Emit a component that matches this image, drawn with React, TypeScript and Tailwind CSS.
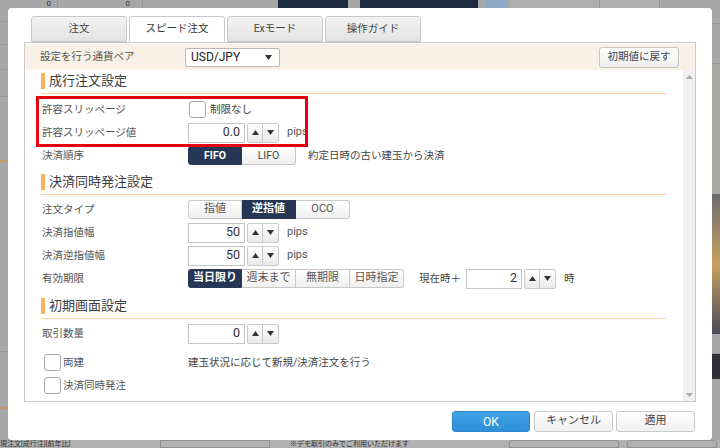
import React from "react";

const FONT = "font-[family-name:Roboto,'Noto_Sans_CJK_JP',sans-serif]";

const Up = () => (
  <svg width="7" height="5" viewBox="0 0 7 5"><path d="M3.5 0L7 5H0z" fill="#333" /></svg>
);
const Down = () => (
  <svg width="7" height="5" viewBox="0 0 7 5"><path d="M0 0H7L3.5 5z" fill="#333" /></svg>
);

const Spin = () => (
  <div className="ml-[2px] flex h-[20px] rounded-[2px] border border-[#c9c9c9] bg-gradient-to-b from-white to-[#eaeaea]">
    <div className="flex w-[15px] items-center justify-center border-r border-[#c9c9c9]"><Up /></div>
    <div className="flex w-[15px] items-center justify-center"><Down /></div>
  </div>
);

const NumInput = ({ value, w = 57 }: { value: string; w?: number }) => (
  <div
    className="flex h-[20px] items-center justify-end border border-[#c4c4c4] bg-white pr-[4px] text-[12.5px] text-[#333]"
    style={{ width: w }}
  >
    {value}
  </div>
);

const Seg = ({ items, active }: { items: string[]; active: number }) => (
  <div className="flex h-[19px]">
    {items.map((t, i) => (
      <div
        key={t}
        className={
          "flex w-[54px] items-center justify-center border text-[11px] " +
          (i > 0 ? "border-l-0 " : "rounded-l-[3px] ") +
          (i === items.length - 1 ? "rounded-r-[3px] " : "") +
          (i === active
            ? "border-[#253755] bg-[#253755] font-bold text-white"
            : "border-[#c8c8c8] bg-gradient-to-b from-white to-[#efefef] text-[#555]")
        }
      >
        {t}
      </div>
    ))}
  </div>
);

const Row = ({ label, children, className = "" }: { label?: string; children?: React.ReactNode; className?: string }) => (
  <div className={"flex h-[23px] items-center " + className}>
    <div className="w-[147px] pl-[1px] text-[10.5px] text-[#555]">{label}</div>
    {children}
  </div>
);

const Heading = ({ title, className = "" }: { title: string; className?: string }) => (
  <div className={"flex items-center border-b border-[#fbd29c] pb-[4px] pt-[2px] " + className}>
    <div className="h-[16px] w-[4px] bg-[#f8b257]" />
    <span className="ml-[4px] text-[13px] leading-[16px] text-[#3d3d3d]">{title}</span>
  </div>
);

const Check = ({ className = "" }: { className?: string }) => (
  <div className={"h-[17px] w-[17px] rounded-[3px] border border-[#a9a9a9] bg-white " + className} />
);

const Pips = () => <span className="ml-[8px] text-[11px] text-[#555]">pips</span>;

const Tab = ({ label, active }: { label: string; active?: boolean }) => (
  <div
    className={
      "flex h-[26px] w-[96px] items-center justify-center rounded-t-[3px] border text-[10.5px] " +
      (active
        ? "relative z-10 -mb-px border-[#c8c8c8] border-b-white bg-white text-[#333]"
        : "border-[#c8c8c8] bg-gradient-to-b from-[#f3f3f3] to-[#e3e3e3] text-[#444]")
    }
  >
    {label}
  </div>
);

const Btn = ({ label, className = "" }: { label: string; className?: string }) => (
  <div
    className={
      "flex h-[21px] items-center justify-center rounded-[3px] border " + className
    }
  >
    {label}
  </div>
);

export default function App() {
  return (
    <div className={"relative h-[448px] w-[720px] overflow-hidden bg-[#a7a7a7] " + FONT}>
      {/* dimmed background page */}
      <div className="absolute left-0 top-0 flex h-[8px] w-[720px] text-[8px] leading-[8px] text-[#333]">
        <div className="flex w-[58px] justify-end border-r border-[#969696] pr-[6px]">0</div>
        <div className="flex w-[85px] justify-end border-r border-[#969696] pr-[12px]">0</div>
        <div className="w-[135px]" />
        <div className="w-[70px] bg-[#1d2a3f]" />
        <div className="w-[12px]" />
        <div className="w-[118px] bg-[#1d2a3f]" />
        <div className="ml-[8px] w-[22px] bg-[#8ea9c6]" />
        <div className="ml-[2px] w-[90px] border-r border-[#969696] bg-[#aeaeae]" />
        <div className="w-[60px] border-r border-[#969696] bg-[#aeaeae]" />
      </div>
      <div className="absolute left-0 top-[8px] flex h-[432px] w-[8px] flex-col">
        <div className="h-[14px] border-b border-[#979797]" />
        <div className="h-[23px] border-b border-[#979797]" />
        <div className="h-[25px] border-b border-[#979797]" />
        <div className="h-[27px] border-b border-[#979797]" />
        <div className="h-[65px] border-b-2 border-[#c79a5e]" />
        <div className="h-[190px] border-b border-[#979797]" />
        <div className="h-[57px] border-b-2 border-[#c79a5e]" />
      </div>
      <div className="absolute right-0 top-[8px] flex h-[432px] w-[8px] flex-col">
        <div className="h-[16px] border-b border-[#979797]" />
        <div className="h-[40px] border-b border-[#979797]" />
        <div className="h-[130px] bg-[#acaaa6]" />
        <div className="h-[140px] bg-gradient-to-b from-[#6b6a6c] via-[#c9a05e] to-[#4b4c55]" />
        <div className="h-[20px] border-b border-[#979797]" />
        <div className="h-[25px] bg-[#2f2f35]" />
      </div>
      <div className="absolute bottom-0 left-0 flex h-[8px] w-[720px] items-end bg-[#b1b1b1] text-[7px] leading-[8px] text-[#333]">
        <div className="w-[110px] whitespace-nowrap">現注文[成行注][前年比]</div>
        <div className="ml-[50px] h-[8px] w-[110px] border border-[#8f8f8f]" />
        <div className="ml-[20px] whitespace-nowrap">※デモ取引のみでご利用いただけます</div>
        <div className="ml-[100px] h-[8px] w-[110px] rounded-t-[3px] border border-[#8f8f8f]" />
        <div className="ml-[8px] h-[8px] w-[90px] rounded-t-[3px] border border-[#8f8f8f]" />
      </div>

      {/* modal */}
      <div className="absolute left-[8px] top-[8px] flex h-[432px] w-[704px] flex-col rounded-[4px] bg-white px-[16px] pt-[8px]">
        <div className="ml-[7px] flex gap-[2px]">
          <Tab label="注文" />
          <Tab label="スピード注文" active />
          <Tab label="Exモード" />
          <Tab label="操作ガイド" />
        </div>
        <div className="flex h-[360px] w-[672px] flex-col border border-[#c8c8c8]">
          {/* header */}
          <div className="mt-[1px] flex h-[26px] items-center bg-[#f9f1e5] pl-[15px] pr-[16px]">
            <div className="w-[145px] text-[10.5px] text-[#555]">設定を行う通貨ペア</div>
            <div className="flex h-[19px] w-[95px] items-center justify-between rounded-[2px] border border-[#b9b9b9] bg-white pl-[5px] pr-[7px] text-[12px] text-[#222]">
              <span>USD/JPY</span>
              <svg width="7" height="5" viewBox="0 0 7 5"><path d="M0 0H7L3.5 5z" fill="#333" /></svg>
            </div>
            <div className="flex-1" />
            <Btn label="初期値に戻す" className="h-[20px] w-[80px] border-[#c6c6c6] bg-gradient-to-b from-white to-[#eeeeee] text-[10.5px] text-[#444]" />
          </div>
          {/* scroll area */}
          <div className="flex flex-1">
            <div className="relative flex flex-1 flex-col pl-[16px] pr-[17px]">
              <Heading title="成行注文設定" className="mt-[1px]" />
              <Row label="許容スリッページ" className="mt-[4px]">
                <Check className="ml-[1px]" />
                <span className="ml-[4px] text-[10.5px] text-[#444]">制限なし</span>
              </Row>
              <Row label="許容スリッページ値">
                <NumInput value="0.0" />
                <Spin />
                <Pips />
              </Row>
              <Row label="決済順序">
                <div className="flex h-[19px]">
                  <div className="flex w-[54px] items-center justify-center rounded-l-[3px] border border-[#253755] bg-[#253755] text-[10.5px] font-bold text-white">FIFO</div>
                  <div className="flex w-[54px] items-center justify-center rounded-r-[3px] border border-l-0 border-[#c8c8c8] bg-gradient-to-b from-white to-[#efefef] text-[10.5px] text-[#444]">LIFO</div>
                </div>
                <span className="ml-[12px] text-[10.5px] text-[#444]">約定日時の古い建玉から決済</span>
              </Row>

              <Heading title="決済同時発注設定" className="mt-[5px]" />
              <Row label="注文タイプ" className="mt-[3px]">
                <Seg items={["指値", "逆指値", "OCO"]} active={1} />
              </Row>
              <Row label="決済指値幅">
                <NumInput value="50" />
                <Spin />
                <Pips />
              </Row>
              <Row label="決済逆指値幅">
                <NumInput value="50" />
                <Spin />
                <Pips />
              </Row>
              <Row label="有効期限">
                <Seg items={["当日限り", "週末まで", "無期限", "日時指定"]} active={0} />
                <span className="ml-[15px] text-[10.5px] text-[#444]">現在時＋</span>
                <div className="ml-[5px] flex items-center">
                  <NumInput value="2" w={56} />
                  <Spin />
                </div>
                <span className="ml-[8px] text-[10.5px] text-[#444]">時</span>
              </Row>

              <Heading title="初期画面設定" className="mt-[6px]" />
              <Row label="取引数量" className="mt-[3px]">
                <NumInput value="0" />
                <Spin />
              </Row>
              <div className="mt-[6px] flex h-[23px] items-center">
                <div className="flex w-[147px] items-center">
                  <Check className="ml-[3px]" />
                  <span className="ml-[2px] text-[10.5px] text-[#555]">両建</span>
                </div>
                <span className="text-[10.5px] text-[#444]">建玉状況に応じて新規/決済注文を行う</span>
              </div>
              <div className="flex h-[23px] items-center">
                <Check className="ml-[3px]" />
                <span className="ml-[2px] text-[10.5px] text-[#555]">決済同時発注</span>
              </div>

              {/* annotation highlight */}
              <div className="pointer-events-none absolute left-[11px] top-[26px] h-[51px] w-[272px] border-[3px] border-[#e60012]" />
            </div>
            {/* scrollbar */}
            <div className="flex w-[12px] flex-col items-center justify-between bg-[#f0f0f0] pb-[4px] pt-[5px]">
              <svg width="7" height="4" viewBox="0 0 7 4"><path d="M3.5 0L7 4H0z" fill="#a8a8a8" /></svg>
              <svg width="7" height="4" viewBox="0 0 7 4"><path d="M0 0H7L3.5 4z" fill="#a8a8a8" /></svg>
            </div>
          </div>
        </div>
        {/* footer */}
        <div className="mt-[9px] flex justify-end pr-[1px]">
          <Btn label="OK" className="w-[78px] border-[#2f86cf] bg-gradient-to-b from-[#42a2e6] to-[#2f8fd8] text-[12px] text-white" />
          <Btn label="キャンセル" className="ml-[4px] w-[79px] border-[#c9c9c9] bg-gradient-to-b from-white to-[#f0f0f0] text-[11px] text-[#444]" />
          <Btn label="適用" className="ml-[3px] w-[79px] border-[#c9c9c9] bg-gradient-to-b from-white to-[#f0f0f0] text-[11px] text-[#444]" />
        </div>
      </div>
    </div>
  );
}
